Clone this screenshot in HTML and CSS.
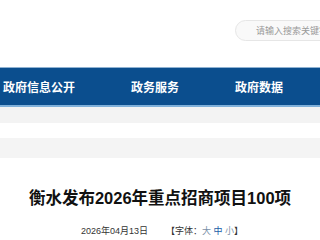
FILE: index.html
```html
<!DOCTYPE html>
<html lang="zh">
<head>
<meta charset="utf-8">
<link rel="stylesheet" href="styles.css">
</head>
<body>
<header class="top">
  <div class="search">请输入搜索关键字</div>
</header>
<nav class="nav">
  <a class="nav-item">政府信息公开</a>
  <a class="nav-item">政务服务</a>
  <a class="nav-item">政府数据</a>
</nav>
<div class="band gray"></div>
<div class="band white"></div>
<div class="band gray2"></div>
<main class="article">
  <h1 class="title">衡水发布2026年重点招商项目100项</h1>
  <div class="meta">
    <span class="date">2026年04月13日</span>
    <span class="font">【字体：<span class="sz">大</span> <span class="sz mid">中</span> <span class="sz">小</span>】</span>
  </div>
</main>
</body>
</html>
```
FILE: styles.css
```css
html, body {
  margin: 0;
  padding: 0;
  overflow: hidden;
  background: #fff;
  font-family: "Noto Sans CJK SC", "Liberation Sans", sans-serif;
}
.top {
  height: 68px;
  display: flex;
  align-items: flex-start;
  padding-top: 20px;
  padding-left: 235px;
  box-sizing: border-box;
  border-bottom: 1px solid #8fb2d2;
}
.search {
  flex: none;
  width: 140px;
  height: 21px;
  box-sizing: border-box;
  border: 1px solid #e6e6e6;
  border-radius: 11px;
  background: #f9f9f9;
  padding-left: 20px;
  font-size: 9px;
  line-height: 19px;
  color: #9a9a9a;
  white-space: nowrap;
}
.nav {
  height: 37px;
  background: #0b4e8e;
  display: flex;
  align-items: center;
  gap: 56px;
  padding-left: 3px;
  border-bottom: 2px solid #7fb0da;
}
.nav-item {
  color: #fff;
  font-size: 12px;
  font-weight: 700;
}
.gray { background: #f3f3f3; height: 16px; }
.white { background: #fff; height: 15px; }
.gray2 { background: #f4f4f4; height: 20px; }
.article {
  text-align: center;
  padding-top: 28px;
}
.title {
  margin: 0;
  font-family: "Liberation Sans", "Noto Sans CJK SC", sans-serif;
  font-size: 16.5px;
  font-weight: 700;
  line-height: 24px;
  color: #111;
}
.meta {
  margin-top: 14px;
  display: flex;
  justify-content: center;
  gap: 18px;
  font-family: "Liberation Sans", "Noto Sans CJK SC", sans-serif;
  font-size: 9px;
  color: #333;
  padding-left: 4px;
}
.sz { color: #7a8fa8; }
.mid { color: #1c5ea8; }
```
